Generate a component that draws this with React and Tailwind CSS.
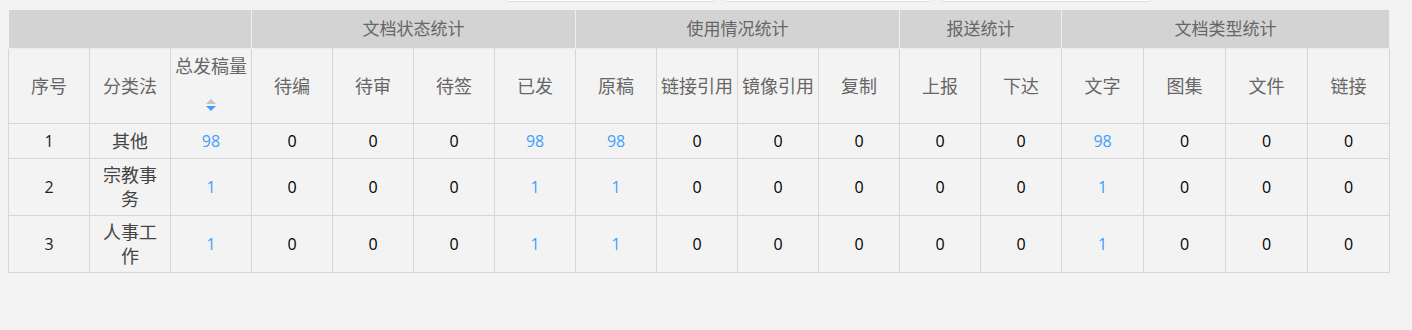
import React from "react";

const groups = [
  { title: "", span: 3 },
  { title: "文档状态统计", span: 4 },
  { title: "使用情况统计", span: 4 },
  { title: "报送统计", span: 2 },
  { title: "文档类型统计", span: 4 },
];

const heads = [
  "序号", "分类法", "总发稿量", "待编", "待审", "待签", "已发", "原稿",
  "链接引用", "镜像引用", "复制", "上报", "下达", "文字", "图集", "文件", "链接",
];

const widths = [81, 81, 81, 81, 81, 81, 81, 81, 81, 81, 81, 81, 81, 82, 82, 82, 82];

// blue = clickable counts
const rows = [
  { no: 1, name: "其他", vals: [98, 0, 0, 0, 98, 98, 0, 0, 0, 0, 0, 98, 0, 0, 0], tall: false },
  { no: 2, name: "宗教事务", vals: [1, 0, 0, 0, 1, 1, 0, 0, 0, 0, 0, 1, 0, 0, 0], tall: true },
  { no: 3, name: "人事工作", vals: [1, 0, 0, 0, 1, 1, 0, 0, 0, 0, 0, 1, 0, 0, 0], tall: true },
];
const blueIdx = [0, 4, 5, 11];

const font = { fontFamily: '"Open Sans", "Noto Sans CJK SC", sans-serif' };

function SortIcon() {
  return (
    <span className="mt-[22px] flex flex-col items-center gap-[2px]">
      <span className="h-0 w-0 border-x-[5px] border-b-[5px] border-x-transparent border-b-[#c0c4cc]" />
      <span className="h-0 w-0 border-x-[5px] border-t-[5px] border-x-transparent border-t-[#409eff]" />
    </span>
  );
}

export default function App() {
  return (
    <div className="min-h-[330px] w-full bg-[#f3f3f3]" style={font}>
      {/* search inputs peeking above */}
      <div className="flex h-[10px] items-start gap-[8px] pl-[505px]">
        <div className="-mt-[28px] h-[30px] w-[210px] rounded-[4px] border border-[#dcdfe6] bg-white" />
        <div className="-mt-[28px] h-[30px] w-[210px] rounded-[4px] border border-[#dcdfe6] bg-white" />
        <div className="-mt-[28px] h-[30px] w-[212px] rounded-[4px] border border-[#dcdfe6] bg-white" />
      </div>

      <div className="pl-[8px]">
        <table className="table-fixed border-collapse text-center" style={{ width: 1382 }}>
          <colgroup>
            {widths.map((w, i) => (
              <col key={i} style={{ width: w }} />
            ))}
          </colgroup>
          <thead>
            <tr className="h-[38px] bg-[#d3d3d3]">
              {groups.map((g, i) => (
                <th
                  key={i}
                  colSpan={g.span}
                  className={`border-r border-r-[#efefef] p-0 text-[17px] font-normal text-[#666] ${
                    i === groups.length - 1 ? "border-r-[#d3d3d3]" : ""
                  }`}
                >
                  {g.title}
                </th>
              ))}
            </tr>
            <tr className="h-[75px]">
              {heads.map((h, i) => (
                <th
                  key={i}
                  className="border border-[#d6d6d6] border-t-[#ececec] px-[4px] py-0 text-[18px] font-normal leading-[22px] text-[#666]"
                >
                  {i === 2 ? (
                    <div className="flex flex-col items-center pb-[6px]">
                      <span className="whitespace-nowrap">{h}</span>
                      <SortIcon />
                    </div>
                  ) : (
                    <span className="whitespace-nowrap">{h}</span>
                  )}
                </th>
              ))}
            </tr>
          </thead>
          <tbody>
            {rows.map((r) => (
              <tr key={r.no} className={r.tall ? "h-[57px]" : "h-[35px]"}>
                <td className="border border-[#d6d6d6] p-0 text-[16px] text-[#222]">{r.no}</td>
                <td className="border border-[#d6d6d6] px-[10px] py-0 text-[18px] leading-[24px] text-[#444]">
                  {r.name}
                </td>
                {r.vals.map((v, j) => (
                  <td
                    key={j}
                    className={`border border-[#d6d6d6] p-0 text-[16px] ${
                      blueIdx.includes(j) ? "text-[#409eff]" : "text-black"
                    }`}
                  >
                    {v}
                  </td>
                ))}
              </tr>
            ))}
          </tbody>
        </table>
      </div>
    </div>
  );
}
